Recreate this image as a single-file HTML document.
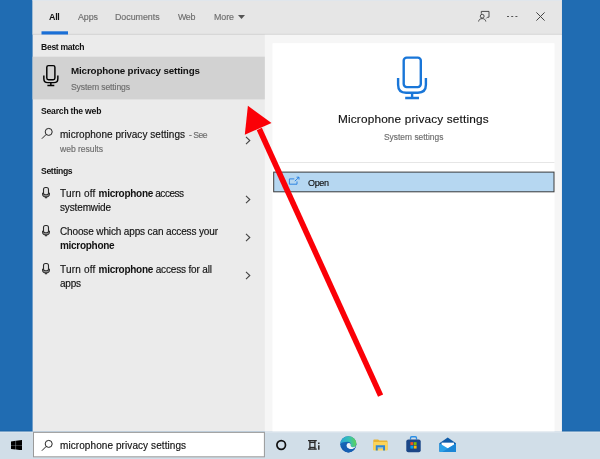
<!DOCTYPE html>
<html><head><meta charset="utf-8">
<style>
*{box-sizing:border-box;margin:0;padding:0}
html,body{width:600px;height:459px;overflow:hidden}
body{background:#206cb2;font-family:"Liberation Sans",sans-serif;color:#111;position:relative}
.abs{position:absolute}
.t{position:absolute;z-index:5;will-change:transform;-webkit-text-stroke:0.15px currentColor;white-space:pre;line-height:1;transform-origin:0 0}
.g{color:#6d6d6d}
b{font-weight:700;-webkit-text-stroke:0}
</style></head><body>

<svg class="abs" style="left:0;top:0" width="600" height="459" viewBox="0 0 600 459">
<rect x="0" y="430.7" width="600" height="1.0" fill="#185fa0"/>
<rect x="32.6" y="0" width="529.2" height="431.7" fill="#ebebeb"/>
<rect x="32.6" y="0" width="529.2" height="34" fill="#e6e6e6"/>
<rect x="32.6" y="0" width="529.2" height="0.8" fill="#dfe6ee"/>
<rect x="32.6" y="33.8" width="529.2" height="1.0" fill="#d3d3d3"/>
<rect x="264.8" y="34.8" width="297.0" height="396.9" fill="#f6f6f6"/>
<rect x="272.5" y="43.2" width="282.0" height="388.5" fill="#ffffff"/>
<rect x="32.6" y="56.7" width="232.2" height="42.7" fill="#d2d2d2"/>
<rect x="41.5" y="31.3" width="26.5" height="3.2" fill="#1a6fd6"/>
<rect x="279.3" y="162" width="275.2" height="1" fill="#e6e6e6"/>
<rect x="273.2" y="171.6" width="281.3" height="20.7" fill="#3a3a3a"/>
<rect x="274.2" y="172.6" width="279.3" height="18.7" fill="#b6d7f1"/>
<rect x="0" y="431.7" width="600" height="27.3" fill="#d1dee8"/>
<rect x="0" y="431.7" width="600" height="1.0" fill="#dde6ee"/>
<rect x="33" y="431.9" width="231.9" height="25.4" fill="#9a9a9a"/>
<rect x="34" y="432.9" width="229.9" height="23.4" fill="#ffffff"/>
</svg>
<div class="t" id="t_all" style="left:49.4px;top:13.00px;font-size:8.9px"><b style="letter-spacing:-0.272px">All</b></div>
<div class="t g" id="t_apps" style="left:77.6px;top:13.00px;font-size:8.9px"><span style="letter-spacing:-0.078px">Apps</span></div>
<div class="t g" id="t_docs" style="left:115.4px;top:13.00px;font-size:8.9px"><span style="letter-spacing:-0.036px">Documents</span></div>
<div class="t g" id="t_web" style="left:178px;top:13.00px;font-size:8.9px"><span style="letter-spacing:-0.347px">Web</span></div>
<div class="t g" id="t_more" style="left:213.6px;top:13.00px;font-size:8.9px"><span style="letter-spacing:-0.078px">More</span></div>
<div class="t" id="t_best" style="left:41px;top:43.00px;font-size:8.6px"><b style="letter-spacing:-0.303px">Best match</b></div>
<div class="t" id="t_mps" style="left:71px;top:66.00px;font-size:9.8px"><b style="letter-spacing:-0.148px">Microphone privacy settings</b></div>
<div class="t g" id="t_sys" style="left:71px;top:83.00px;font-size:8.6px"><span style="letter-spacing:-0.118px">System settings</span></div>
<div class="t" id="t_stw" style="left:41px;top:107.00px;font-size:8.6px"><b style="letter-spacing:-0.204px">Search the web</b></div>
<div class="t" id="t_q" style="left:60px;top:130.00px;font-size:10px"><span style="letter-spacing:0.040px">microphone privacy settings</span></div>
<div class="t g" id="t_see" style="left:189px;top:131.00px;font-size:8.6px"><span style="letter-spacing:-0.487px">- See</span></div>
<div class="t g" id="t_wr" style="left:60px;top:145.00px;font-size:8.6px"><span style="letter-spacing:-0.047px">web results</span></div>
<div class="t" id="t_set" style="left:41px;top:167.00px;font-size:8.6px"><b style="letter-spacing:-0.329px">Settings</b></div>
<div class="t" id="t_a1" style="left:60px;top:189.00px;font-size:10px"><span style="letter-spacing:0.212px">Turn off </span><b style="letter-spacing:-0.283px">microphone</b><span style="letter-spacing:-0.484px"> access</span></div>
<div class="t" id="t_a2" style="left:60px;top:203.00px;font-size:10px"><span style="letter-spacing:-0.139px">systemwide</span></div>
<div class="t" id="t_b1" style="left:60px;top:227.00px;font-size:10px"><span style="letter-spacing:-0.135px">Choose which apps can access your</span></div>
<div class="t" id="t_b2" style="left:60px;top:241.00px;font-size:10px"><b style="letter-spacing:-0.293px">microphone</b></div>
<div class="t" id="t_c1" style="left:60px;top:265.00px;font-size:10px"><span style="letter-spacing:0.212px">Turn off </span><b style="letter-spacing:-0.283px">microphone</b><span style="letter-spacing:-0.153px"> access for all</span></div>
<div class="t" id="t_c2" style="left:60px;top:279.00px;font-size:10px"><span style="letter-spacing:-0.229px">apps</span></div>
<div class="t" id="t_title" style="left:338px;top:114.00px;font-size:11.8px"><span style="letter-spacing:0.169px">Microphone privacy settings</span></div>
<div class="t g" id="t_sys2" style="left:383.6px;top:133.00px;font-size:8.4px"><span style="letter-spacing:0.020px">System settings</span></div>
<div class="t" id="t_open" style="left:308px;top:179.00px;font-size:9.0px"><span style="letter-spacing:-0.344px">Open</span></div>
<div class="t" id="t_sb" style="left:59.5px;top:441.00px;font-size:10px"><span style="letter-spacing:0.083px">microphone privacy settings</span></div>
<!-- tabs -->
<svg class="abs" style="left:238.400px;top:14.900px" width="7" height="4" viewBox="0 0 7 4"><path d="M0 0H7L3.5 4Z" fill="#555"/></svg>

<!-- top-right icons -->
<svg class="abs" style="left:477px;top:9px" width="14" height="14" viewBox="0 0 14 14" fill="none" stroke="#4a4a4a" stroke-width="1"><path d="M4.300 4.700V2.400H12V8.200H10.500L9.300 9.400"/><circle cx="5.200" cy="7.200" r="1.900"/><path d="M1.600 12.500C1.900 10.500 3.200 9.600 5.200 9.600S8.500 10.500 8.800 12.500"/></svg>
<div class="abs" style="left:507px;top:15.8px;width:1.6px;height:1.4px;background:#555;box-shadow:4.2px 0 0 #555,8.4px 0 0 #555"></div>
<svg class="abs" style="left:536px;top:12px" width="9" height="9" viewBox="0 0 9 9" stroke="#444" stroke-width="1"><path d="M0.4 0.4L8.6 8.6M8.6 0.4L0.4 8.6"/></svg>

<!-- left list -->
<svg class="abs" style="left:42px;top:64px" width="18" height="23" viewBox="0 0 18 23" fill="none" stroke="#000" stroke-width="1.450"><rect x="4.800" y="1.600" width="8.100" height="14.200" rx="1.700"/><path d="M1.850 11.400V14.700Q1.850 18.600 5.700 18.600H12Q15.850 18.600 15.850 14.700V11.400"/><path d="M8.850 18.600V21.500M5.400 21.500H12.300"/></svg>

<svg class="abs" style="left:40.500px;top:127px" width="12" height="12" viewBox="0 0 12 12" fill="none" stroke="#222" stroke-width="1"><circle cx="7.700" cy="4.900" r="3.500"/><path d="M5.200 7.400L0.900 11.700"/></svg>



<!-- small mic icons -->
<svg class="abs smic" style="left:41px;top:186.0px" width="10" height="13" viewBox="0 0 10 13" fill="none" stroke="#2a2a2a" stroke-width="1.1"><rect x="2.500" y="1.500" width="5" height="7.400" rx="2" fill="#e2e2e2"/><path d="M1.600 6.800V7.900C1.600 10 3.200 10.800 5 10.800S8.400 10 8.400 7.900V6.800"/><path d="M5 10.800V11.700M3.900 11.700H6.100"/></svg>
<svg class="abs smic" style="left:41px;top:224.0px" width="10" height="13" viewBox="0 0 10 13" fill="none" stroke="#2a2a2a" stroke-width="1.1"><rect x="2.500" y="1.500" width="5" height="7.400" rx="2" fill="#e2e2e2"/><path d="M1.600 6.800V7.900C1.600 10 3.200 10.800 5 10.800S8.400 10 8.400 7.900V6.800"/><path d="M5 10.800V11.700M3.900 11.700H6.100"/></svg>
<svg class="abs smic" style="left:41px;top:262.0px" width="10" height="13" viewBox="0 0 10 13" fill="none" stroke="#2a2a2a" stroke-width="1.1"><rect x="2.500" y="1.500" width="5" height="7.400" rx="2" fill="#e2e2e2"/><path d="M1.600 6.800V7.900C1.600 10 3.200 10.800 5 10.800S8.400 10 8.400 7.900V6.800"/><path d="M5 10.800V11.700M3.900 11.700H6.100"/></svg>

<!-- chevrons -->
<svg class="abs" style="left:245px;top:135.600px" width="6" height="9" viewBox="0 0 6 9" fill="none" stroke="#444" stroke-width="1.100"><path d="M1 0.800L4.800 4.500L1 8.200"/></svg>
<svg class="abs" style="left:245px;top:195px" width="6" height="9" viewBox="0 0 6 9" fill="none" stroke="#444" stroke-width="1.100"><path d="M1 0.800L4.800 4.500L1 8.200"/></svg>
<svg class="abs" style="left:245px;top:233px" width="6" height="9" viewBox="0 0 6 9" fill="none" stroke="#444" stroke-width="1.100"><path d="M1 0.800L4.800 4.500L1 8.200"/></svg>
<svg class="abs" style="left:245px;top:270.700px" width="6" height="9" viewBox="0 0 6 9" fill="none" stroke="#444" stroke-width="1.100"><path d="M1 0.800L4.800 4.500L1 8.200"/></svg>

<!-- right card -->
<svg class="abs" style="left:394px;top:54px" width="36" height="48" viewBox="0 0 36 48" fill="none" stroke="#1976d8" stroke-width="2.400"><rect x="9.700" y="3.600" width="17.100" height="29.500" rx="3"/><path d="M4.100 23.900V30.700C4.100 36 7 38.700 12.100 38.700H23.900C29 38.700 31.900 36 31.900 30.700V23.900"/><path d="M18.100 38.700V44M11.200 44H25"/></svg>
<svg class="abs" style="left:288px;top:175.5px" width="13" height="11" viewBox="0 0 13 11" fill="none" stroke="#1f7be0" stroke-width="0.9"><path d="M6.300 2.900H1.400V8.200H9V5.400"/><path d="M6.800 5.200L10.900 1.300M8.600 1.200H11V3.600"/></svg>

<!-- taskbar -->
<svg class="abs" style="left:11px;top:440px" width="11" height="10.3" viewBox="0 0 12 11" preserveAspectRatio="none" fill="#000"><path d="M0 1.500L5.100 0.800V5.300H0ZM5.500 0.750L12 0V5.300H5.500ZM0 5.700H5.100V10.200L0 9.500ZM5.500 5.700H12V11L5.500 10.250Z"/></svg>
<svg class="abs" style="left:40.500px;top:438.500px" width="12" height="12" viewBox="0 0 12 12" fill="none" stroke="#222" stroke-width="1"><circle cx="7.700" cy="4.900" r="3.500"/><path d="M5.200 7.400L0.900 11.700"/></svg>
<svg class="abs" style="left:275px;top:439px" width="12" height="12" viewBox="0 0 12 12" fill="none" stroke="#111" stroke-width="1.700"><circle cx="6.200" cy="6" r="4.300"/></svg>
<svg class="abs" style="left:307.600px;top:439.800px" width="12" height="10" viewBox="0 0 12 10" fill="none" stroke="#2a2a2a" stroke-width="1.200"><path d="M0 0.700H8.800M0 9.200H8.800"/><rect x="1.900" y="2.400" width="5" height="5.100" stroke-width="1.300"/><path d="M1.900 0.700V2.400M6.900 0.700V2.400M1.900 7.500V9.200M6.900 7.500V9.200" stroke-width="1.300"/><path d="M10.800 2.500V3.900M10.800 5.300V9.800" stroke-width="1.500"/></svg>

<!-- edge -->
<svg class="abs" style="left:339.600px;top:436.300px" width="17" height="17" viewBox="0 0 17 17"><defs><linearGradient id="eg" x1="0" y1="0.300" x2="1" y2="0.200"><stop offset="0" stop-color="#2aa3d6"/><stop offset="0.550" stop-color="#35c1b4"/><stop offset="1" stop-color="#62d34c"/></linearGradient><linearGradient id="eb" x1="0" y1="0" x2="0.600" y2="1"><stop offset="0" stop-color="#1b78c8"/><stop offset="1" stop-color="#0f4c9e"/></linearGradient></defs>
<circle cx="8.300" cy="8.300" r="8.100" fill="url(#eb)"/>
<path d="M0.300 7.400C0.900 3.200 4.300 0.200 8.400 0.200C12.800 0.200 16.400 3.600 16.400 7.500C16.400 9.700 15 11.200 13 11.200C11 11.200 10.300 10.100 10.700 9C11.200 7.400 10 5.700 7.600 5.700C4.400 5.700 1.300 6.800 0.300 7.400Z" fill="url(#eg)"/>
<path d="M6.300 9.600C6.300 8 7.500 6.900 8.800 6.900C10.300 6.900 11 8 10.700 9.100C10.400 10.300 11.300 11.300 13 11.300C14.200 11.300 15.200 10.800 15.900 10.100C15.300 12.200 13 13.500 10.700 13.300C8 13.100 6.300 11.400 6.300 9.600Z" fill="#eef4f9"/>
<path d="M6.300 9.600C6.300 11.400 8 13.100 10.700 13.300C12.600 13.450 14.500 12.600 15.500 11.100C14.700 14.300 11.800 16.400 8.300 16.400C5.500 16.400 3.600 14.600 3.600 12C3.600 9.800 5 8.100 7.300 7.500C6.700 8 6.300 8.800 6.300 9.600Z" fill="#1560b4"/>
</svg>
<!-- explorer -->
<svg class="abs" style="left:373.400px;top:438.800px" width="14.800" height="12.400" viewBox="0 0 15 13" preserveAspectRatio="none"><path d="M0.300 1.200C0.300 0.700 0.700 0.400 1.100 0.400H5.200L6.500 1.700H14C14.400 1.700 14.700 2 14.700 2.400V11.500H0.300Z" fill="#e9b432"/><rect x="0.300" y="3.200" width="14.400" height="8.800" rx="0.500" fill="#fbd45a"/><path d="M2.800 6.500H12.200V12H10.200V8.700H4.800V12H2.800Z" fill="#2f86d6"/><rect x="4.800" y="8.700" width="5.400" height="1.200" fill="#6fb4ee"/></svg>
<!-- store -->
<svg class="abs" style="left:406px;top:436.200px" width="15" height="16.600" viewBox="0 0 16 17" preserveAspectRatio="none"><path d="M4.800 3.600V2C4.800 1.300 5.300 0.800 6 0.800H10C10.700 0.800 11.200 1.300 11.200 2V3.600" fill="none" stroke="#2d8fe6" stroke-width="1.400"/><rect x="0.300" y="3.500" width="15.400" height="13.200" rx="2.200" fill="#1b4687"/><rect x="4.700" y="6.300" width="3" height="3" fill="#f25022"/><rect x="8.300" y="6.300" width="3" height="3" fill="#7fba00"/><rect x="4.700" y="9.900" width="3" height="3" fill="#00a4ef"/><rect x="8.300" y="9.900" width="3" height="3" fill="#ffb900"/></svg>
<!-- mail -->
<svg class="abs" style="left:438.500px;top:436.600px" width="17.500" height="15.600" viewBox="0 0 18 16" preserveAspectRatio="none"><path d="M0.400 6.500L9 0.400L17.600 6.500V15H0.400Z" fill="#0f5ba8"/><path d="M2.600 5.800H15.400V12H2.600Z" fill="#fff"/><path d="M0.400 6.500L9 11.500L17.600 6.500V15.600H0.400Z" fill="#2aa0e8"/><path d="M17.600 6.500V15.600H3Z" fill="#1b86d6"/></svg>

<!-- red arrow -->
<svg class="abs" style="left:0;top:0" width="600" height="459" viewBox="0 0 600 459"><path d="M380.600 395.600L259.300 129" stroke="#fb0007" stroke-width="5.600" fill="none"/><path d="M247.900 105.700L271.500 123.100L244.800 134.700Z" fill="#fb0007"/></svg>
</body></html>
